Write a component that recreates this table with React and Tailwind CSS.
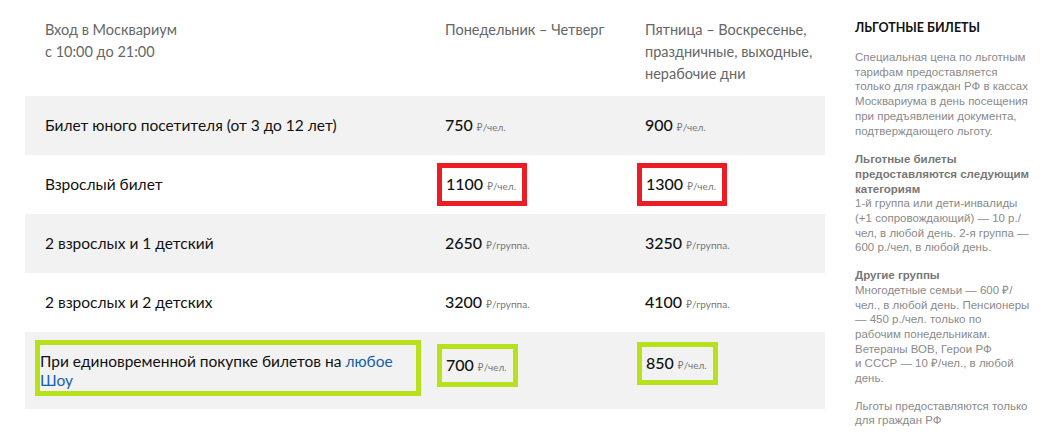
const ROWS = [
  { name: 'Билет юного посетителя (от 3 до 12 лет)', a: '750', b: '900', unit: '₽/чел.', gray: true },
  { name: 'Взрослый билет', a: '1100', b: '1300', unit: '₽/чел.', mark: 'red' },
  { name: '2 взрослых и 1 детский', a: '2650', b: '3250', unit: '₽/группа.', gray: true },
  { name: '2 взрослых и 2 детских', a: '3200', b: '4100', unit: '₽/группа.' },
];

const futura = "font-['Lato','Noto_Sans',sans-serif]";

function Price({ value, unit }) {
  return (
    <span className="whitespace-nowrap">
      <span className="text-[16px] font-medium text-[#111]">{value}</span>
      <span className="ml-1 text-[10px] text-[#777]">{unit}</span>
    </span>
  );
}

function Boxed({ color, children }) {
  const border = color === 'red' ? 'border-[#ec1c24]' : 'border-[#b7e21b]';
  return (
    <div className={`-ml-2 inline-flex h-[43px] items-center border-[5px] pl-[4px] pr-[6px] ${border}`}>
      {children}
    </div>
  );
}

// sidebar lines are broken by hand to match the original wrapping
function Lines({ lines }) {
  return lines.map((l, i) => (
    <span key={i} className="block whitespace-nowrap">{l}</span>
  ));
}

export default function App() {
  return (
    <div className="flex w-[1052px] h-[439px] overflow-hidden bg-white">
      <div className={`w-[825px] shrink-0 pl-[25px] ${futura}`}>
        <div className="grid grid-cols-[400px_200px_200px] pt-[19px] h-[96px] text-[14.5px] leading-[22px] text-[#666]">
          <div className="pl-5">Вход в Москвариум<br />с 10:00 до 21:00</div>
          <div className="pl-5">Понедельник – Четверг</div>
          <div className="pl-5">Пятница – Воскресенье,<br />праздничные, выходные,<br />нерабочие дни</div>
        </div>

        {ROWS.map((r) => (
          <div
            key={r.name}
            className={`grid grid-cols-[400px_200px_200px] h-[59px] items-center text-[15.5px] text-[#111] ${r.gray ? 'bg-[#f2f2f2]' : ''}`}
          >
            <div className="pl-5">{r.name}</div>
            <div className="pl-5">
              {r.mark ? <Boxed color={r.mark}><Price value={r.a} unit={r.unit} /></Boxed> : <Price value={r.a} unit={r.unit} />}
            </div>
            <div className="pl-5">
              {r.mark ? <Boxed color={r.mark}><Price value={r.b} unit={r.unit} /></Boxed> : <Price value={r.b} unit={r.unit} />}
            </div>
          </div>
        ))}

        <div className="grid grid-cols-[400px_200px_200px] h-[77px] items-start bg-[#f2f2f2] text-[15.5px] text-[#111]">
          <div className="pl-[10px] pr-1 pt-2">
            <div className="h-[56px] border-[5px] border-[#b7e21b] pt-[7px] leading-[19px]">
              <span className="block">
                При единовременной покупке билетов на <a href="#" className="text-[#1460aa]">любое</a>
              </span>
              <a href="#" className="block text-[#1460aa]">Шоу</a>
            </div>
          </div>
          <div className="pl-5 pt-3">
            <Boxed color="green"><Price value="700" unit="₽/чел." /></Boxed>
          </div>
          <div className="pl-5 pt-[10px]">
            <Boxed color="green"><Price value="850" unit="₽/чел." /></Boxed>
          </div>
        </div>
      </div>

      <aside className="ml-[30px] w-[190px] pt-[20px] font-['Liberation_Sans',Arial,sans-serif] text-[11.5px] leading-[14.7px] text-[#8a8a8a]">
        <h3 className={`mb-[14px] text-[12.5px] leading-[16px] font-bold uppercase text-[#111] ${futura}`}>Льготные билеты</h3>
        <p>
          <Lines lines={[
            'Специальная цена по льготным',
            'тарифам предоставляется',
            'только для граждан РФ в кассах',
            'Москвариума в день посещения',
            'при предъявлении документа,',
            'подтверждающего льготу.',
          ]} />
        </p>
        <p className="mt-[14px]">
          <b className="block text-[#777]">
            <Lines lines={['Льготные билеты', 'предоставляются следующим', 'категориям']} />
          </b>
          <Lines lines={[
            '1-й группа или дети-инвалиды',
            '(+1 сопровождающий) — 10 р./',
            'чел, в любой день. 2-я группа —',
            '600 р./чел, в любой день.',
          ]} />
        </p>
        <p className="mt-[13px]">
          <b className="block text-[#777]">Другие группы</b>
          <Lines lines={[
            'Многодетные семьи — 600 ₽/',
            'чел., в любой день. Пенсионеры',
            '— 450 р./чел. только по',
            'рабочим понедельникам.',
            'Ветераны ВОВ, Герои РФ',
            'и СССР — 10 ₽/чел., в любой',
            'день.',
          ]} />
        </p>
        <p className="mt-[13px]">
          <Lines lines={['Льготы предоставляются только', 'для граждан РФ']} />
        </p>
      </aside>
    </div>
  );
}
